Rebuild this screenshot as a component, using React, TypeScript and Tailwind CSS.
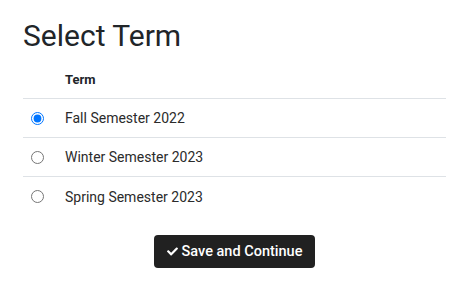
import React, { useState } from "react";
import { FaCheck } from "react-icons/fa";

const terms = ["Fall Semester 2022", "Winter Semester 2023", "Spring Semester 2023"];

export default function App() {
  const [sel, setSel] = useState(0);
  return (
    <div
      className="w-[466px] h-[285px] bg-white text-[#212529] px-[23px] pt-[18px]"
      style={{ fontFamily: "Roboto, 'Liberation Sans', sans-serif" }}
    >
      <h1 className="text-[30px] leading-[36px] font-normal text-[#212529]">Select Term</h1>
      <div className="w-[423px]">
        <div className="flex items-end h-[45px] pb-[8px] border-b border-[#dee2e6]">
          <div className="w-[42px]" />
          <div className="text-[13px] leading-[20px] font-bold">Term</div>
        </div>
        {terms.map((t, i) => (
          <label
            key={t}
            className={`flex items-center h-[39px] cursor-pointer ${i < terms.length - 1 ? "border-b border-[#dee2e6]" : ""}`}
          >
            <div className="w-[42px] flex items-center pl-[8px]">
              <input
                type="radio"
                name="term"
                checked={sel === i}
                onChange={() => setSel(i)}
                className="m-0 w-[13px] h-[13px] accent-[#0075ff]"
              />
            </div>
            <div className="text-[14px] leading-[20px] text-[#2b2b2b]">{t}</div>
          </label>
        ))}
        <div className="flex justify-center mt-[19px]">
          <button className="flex items-center gap-[4px] h-[33px] w-[161px] justify-center bg-[#212121] text-white rounded-[4px] text-[14.5px] font-medium">
            <FaCheck className="w-[11px] h-[11px]" />
            <span>Save and Continue</span>
          </button>
        </div>
      </div>
    </div>
  );
}
